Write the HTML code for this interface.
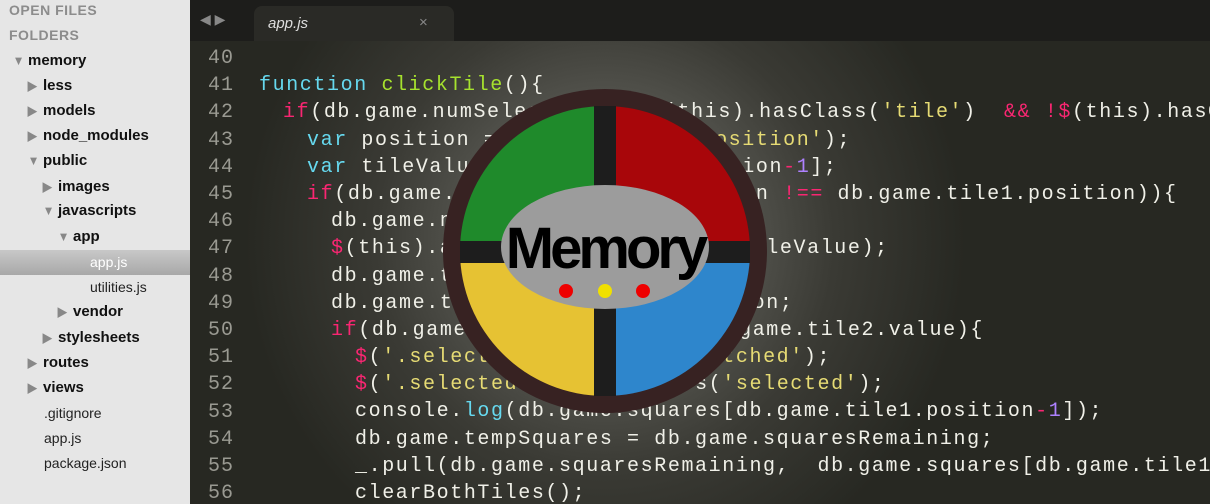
<!DOCTYPE html>
<html><head><meta charset="utf-8"><style>
*{margin:0;padding:0;box-sizing:border-box}
body{width:1210px;height:504px;overflow:hidden;position:relative;background:#272822;font-family:"Liberation Sans",sans-serif}
#side{position:absolute;left:0;top:0;width:190px;height:504px;background:#e6e6e6}
.r{position:absolute;height:25px;line-height:25px;font-size:15px;font-weight:bold;color:#111;white-space:nowrap}
.h{color:#8c8c8c;font-size:14px;letter-spacing:.5px}
.n{font-weight:normal;font-size:14px;color:#222}
.t{display:inline-block;color:#888;font-size:13px;width:16px;transform:scaleX(.9)}
#sel{position:absolute;left:0;top:250px;width:190px;height:25px;background:linear-gradient(#c8c8c8,#a8a8a8)}
#tabs{position:absolute;left:190px;top:0;width:1020px;height:41px;background:#1d1d1b;overflow:hidden}
#tab{position:absolute;left:64px;top:6px;width:200px;height:35px;background:#2a2a26;border-radius:8px 8px 0 0}
#ed{position:absolute;left:190px;top:41px;width:1020px;height:463px;overflow:hidden;background:radial-gradient(circle at 415px 200px,#8a8a86 0,#5b5b55 110px,#3a3a34 230px,#272822 360px)}
.code{position:absolute;top:4px;left:69px;font-family:"Liberation Mono",monospace;font-size:20px;letter-spacing:1.6px;line-height:27.2px;color:#f0f0e8;width:1100px}
.code div{height:27.2px;white-space:pre}
.ln{position:absolute;left:18px;top:4px;font-family:"Liberation Mono",monospace;font-size:20px;line-height:27.2px;color:#9a9a92;letter-spacing:1px}
.k{color:#f92672}.f{color:#66d9ef}.g{color:#a6e22e}.s{color:#e6db74}.p{color:#ae81ff}
</style></head><body>
<div id="side">
<div id="sel"></div>
<div class="r h" style="left:9px;top:-2px">OPEN FILES</div>
<div class="r h" style="left:9px;top:23px">FOLDERS</div>
<div class="r" style="left:12px;top:48px"><span class="t">▼</span>memory</div>
<div class="r" style="left:27px;top:73px"><span class="t">▶</span>less</div>
<div class="r" style="left:27px;top:98px"><span class="t">▶</span>models</div>
<div class="r" style="left:27px;top:123px"><span class="t">▶</span>node_modules</div>
<div class="r" style="left:27px;top:148px"><span class="t">▼</span>public</div>
<div class="r" style="left:42px;top:174px"><span class="t">▶</span>images</div>
<div class="r" style="left:42px;top:198px"><span class="t">▼</span>javascripts</div>
<div class="r" style="left:57px;top:224px"><span class="t">▼</span>app</div>
<div class="r n" style="left:90px;top:250px;color:#fff">app.js</div>
<div class="r n" style="left:90px;top:275px">utilities.js</div>
<div class="r" style="left:57px;top:299px"><span class="t">▶</span>vendor</div>
<div class="r" style="left:42px;top:325px"><span class="t">▶</span>stylesheets</div>
<div class="r" style="left:27px;top:350px"><span class="t">▶</span>routes</div>
<div class="r" style="left:27px;top:375px"><span class="t">▶</span>views</div>
<div class="r n" style="left:44px;top:401px">.gitignore</div>
<div class="r n" style="left:44px;top:426px">app.js</div>
<div class="r n" style="left:44px;top:451px">package.json</div>
</div>
<div id="tabs"><div style="position:absolute;left:10px;top:11px;color:#888;font-size:14px">◀ ▶</div>
<div id="tab"><span style="position:absolute;left:14px;top:9px;color:#ddd;font-style:italic;font-size:15px">app.js</span><span style="position:absolute;left:165px;top:8px;color:#888;font-size:15px">×</span></div></div>
<div id="ed">
<div class="ln">40<br>41<br>42<br>43<br>44<br>45<br>46<br>47<br>48<br>49<br>50<br>51<br>52<br>53<br>54<br>55<br>56</div>
<div class="code"><div></div><div><span class="f">function</span> <span class="g">clickTile</span>(){</div><div style="padding-left:24px"><span class="k">if</span>(db.game.numSelected <span class="k">&lt;</span> <span class="p">2</span> $(this).hasClass(<span class="s">'tile'</span>)  <span class="k">&amp;&amp;</span> <span class="k">!$</span>(this).hasClass(</div><div style="padding-left:48px"><span class="f">var</span> position = $(this).data(<span class="s">'position'</span>);</div><div style="padding-left:48px"><span class="f">var</span> tileValue = db.game.sq[position<span class="k">-</span><span class="p">1</span>];</div><div style="padding-left:48px"><span class="k">if</span>(db.game.numSel <span class="k">==</span> <span class="p">1</span> &amp;&amp; position <span class="k">!==</span> db.game.tile1.position)){</div><div style="padding-left:72px">db.game.numSelected<span class="k">++</span>;</div><div style="padding-left:72px"><span class="k">$</span>(this).addClass(<span class="s">'show'</span>).text(tileValue);</div><div style="padding-left:72px">db.game.tile2.value = tileValue;</div><div style="padding-left:72px">db.game.tile2.position = position;</div><div style="padding-left:72px"><span class="k">if</span>(db.game.tile1.value <span class="k">===</span> db.game.tile2.value){</div><div style="padding-left:96px"><span class="k">$</span>(<span class="s">'.selected'</span>).addClass(<span class="s">'matched'</span>);</div><div style="padding-left:96px"><span class="k">$</span>(<span class="s">'.selected'</span>).removeClass(<span class="s">'selected'</span>);</div><div style="padding-left:96px">console.<span class="f">log</span>(db.game.squares[db.game.tile1.position<span class="k">-</span><span class="p">1</span>]);</div><div style="padding-left:96px">db.game.tempSquares = db.game.squaresRemaining;</div><div style="padding-left:96px">_.pull(db.game.squaresRemaining,  db.game.squares[db.game.tile1.positio</div><div style="padding-left:96px">clearBothTiles();</div></div>
<svg style="position:absolute;left:252px;top:48px" width="330" height="330" viewBox="0 0 330 330">
<circle cx="163" cy="162" r="162" fill="#372222"/>
<path d="M163 162 L163 17 A145 145 0 0 0 18 162 Z" fill="#1f8a2b"/>
<path d="M163 162 L163 17 A145 145 0 0 1 308 162 Z" fill="#a8060a"/>
<path d="M163 162 L18 162 A145 145 0 0 0 163 307 Z" fill="#e6c233"/>
<path d="M163 162 L308 162 A145 145 0 0 1 163 307 Z" fill="#2e86cc"/>
<rect x="152" y="17" width="22" height="290" fill="#1d1d1d"/>
<rect x="18" y="152" width="290" height="22" fill="#1d1d1d"/>
<ellipse cx="163" cy="158" rx="104" ry="62" fill="#9c9c9c"/>
<text x="163" y="179" text-anchor="middle" font-family="Liberation Sans" font-weight="bold" font-size="58" letter-spacing="-4" fill="#000">Memory</text>
<circle cx="124" cy="202" r="7" fill="#ee0000"/><circle cx="163" cy="202" r="7" fill="#f0e000"/><circle cx="201" cy="202" r="7" fill="#ee0000"/>
</svg>
</div>
</body></html>
